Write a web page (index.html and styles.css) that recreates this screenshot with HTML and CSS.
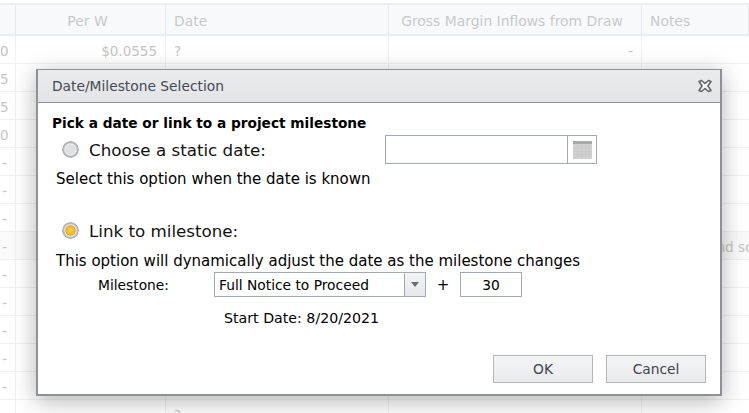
FILE: index.html
```html
<!DOCTYPE html>
<html lang="en">
<head>
    <meta charset="UTF-8">
    <title>Date/Milestone Selection</title>
    <link rel="stylesheet" href="styles.css">
</head>
<body>
    <div class="grid">
        <div class="row head"><div class="cell c0"></div><div class="cell c1">Per W</div><div class="cell c2">Date</div><div class="cell c3">Gross Margin Inflows from Draw</div><div class="cell c4">Notes</div></div>
        <div class="row"><div class="cell c0">0</div><div class="cell c1">$0.0555</div><div class="cell c2">?</div><div class="cell c3">-</div><div class="cell c4"></div></div>
        <div class="row"><div class="cell c0">5</div><div class="cell c1"></div><div class="cell c2"></div><div class="cell c3"></div><div class="cell c4"></div></div>
        <div class="row"><div class="cell c0">5</div><div class="cell c1"></div><div class="cell c2"></div><div class="cell c3"></div><div class="cell c4"></div></div>
        <div class="row"><div class="cell c0">0</div><div class="cell c1"></div><div class="cell c2"></div><div class="cell c3"></div><div class="cell c4"></div></div>
        <div class="row"><div class="cell c0">-</div><div class="cell c1"></div><div class="cell c2"></div><div class="cell c3"></div><div class="cell c4"></div></div>
        <div class="row"><div class="cell c0">-</div><div class="cell c1"></div><div class="cell c2"></div><div class="cell c3"></div><div class="cell c4"></div></div>
        <div class="row"><div class="cell c0">-</div><div class="cell c1"></div><div class="cell c2"></div><div class="cell c3"></div><div class="cell c4"></div></div>
        <div class="row alt"><div class="cell c0">-</div><div class="cell c1"></div><div class="cell c2"></div><div class="cell c3"></div><div class="cell c4">Pending and sc</div></div>
        <div class="row"><div class="cell c0">-</div><div class="cell c1"></div><div class="cell c2"></div><div class="cell c3"></div><div class="cell c4"></div></div>
        <div class="row"><div class="cell c0">-</div><div class="cell c1"></div><div class="cell c2"></div><div class="cell c3"></div><div class="cell c4"></div></div>
        <div class="row"><div class="cell c0">-</div><div class="cell c1"></div><div class="cell c2"></div><div class="cell c3"></div><div class="cell c4"></div></div>
        <div class="row"><div class="cell c0">-</div><div class="cell c1"></div><div class="cell c2"></div><div class="cell c3"></div><div class="cell c4"></div></div>
        <div class="row"><div class="cell c0">-</div><div class="cell c1"></div><div class="cell c2"></div><div class="cell c3"></div><div class="cell c4"></div></div>
        <div class="row"><div class="cell c0"></div><div class="cell c1"></div><div class="cell c2">?</div><div class="cell c3"></div><div class="cell c4"></div></div>
    </div>

    <div class="dialog">
        <div class="dialog-title">
            <span>Date/Milestone Selection</span>
            <svg class="close" width="16" height="14" viewBox="0 0 16 14">
                <path d="M2 2.5 L4.5 1.5 L8 4.5 L11.5 1.5 L14 2.5 L11 7 L14 11.5 L11.5 12.5 L8 9.5 L4.5 12.5 L2 11.5 L5 7 Z" fill="#f4f5f6" stroke="#63666b" stroke-width="1.6" stroke-linejoin="round"/>
            </svg>
        </div>
        <div class="dialog-body">
            <div class="lead">Pick a date or link to a project milestone</div>

            <div class="choice">
                <label class="choice-label"><span class="radio"></span>Choose a static date:</label>
                <div class="date-input">
                    <div class="date-text"></div>
                    <div class="date-btn">
                        <svg width="19" height="18" viewBox="0 0 19 18">
                            <rect x="0" y="0" width="19" height="18" fill="#d0d0d0"/>
                            <rect x="0" y="0" width="19" height="3" fill="#a8a8a8"/>
                            <path d="M1 7.5H18M1 10.5H18M1 13.5H18M4.5 4V17M8.5 4V17M12.5 4V17M16 4V17" stroke="#c9c9c9" stroke-width="1"/>
                        </svg>
                    </div>
                </div>
            </div>
            <div class="hint hint-static">Select this option when the date is known</div>

            <div class="choice choice-link">
                <label class="choice-label"><span class="radio on"></span>Link to milestone:</label>
            </div>
            <div class="hint hint-link">This option will dynamically adjust the date as the milestone changes</div>

            <div class="milestone-row">
                <span class="milestone-label">Milestone:</span>
                <div class="select">
                    <div class="select-text">Full Notice to Proceed</div>
                    <div class="select-btn"><span class="arrow"></span></div>
                </div>
                <span class="plus">+</span>
                <div class="days">30</div>
            </div>
            <div class="start-date">Start Date: 8/20/2021</div>

            <div class="actions">
                <button class="btn">OK</button>
                <button class="btn">Cancel</button>
            </div>
        </div>
    </div>
</body>
</html>
```

FILE: styles.css
```css
html, body {
    margin: 0;
    height: 100%;
    overflow: hidden;
}

body {
    position: relative;
    padding-top: 4px;
    box-sizing: border-box;
    background: #fff;
    font-family: "DejaVu Sans", sans-serif;
    font-size: 13.8px;
    color: #000;
}

/* grid behind the dialog */
.grid {
    border-top: 2px solid #eceef0;
    margin-top: -1px;
}

.row {
    display: flex;
    height: 28px;
    box-sizing: border-box;
    border-bottom: 1px solid #f1f1f1;
    color: #c4c4c4;
    font-size: 13.5px;
}

.row.head {
    height: 31px;
    background: #f8f9fb;
    border-bottom: 2px solid #ebecee;
    color: #c9c9c9;
    font-size: 13.9px;
}

.row.alt {
    background: #fafafa;
}

.cell {
    box-sizing: border-box;
    padding: 0 8px;
    line-height: 31px;
    border-right: 1px solid #f1f1f1;
    white-space: nowrap;
    overflow: hidden;
}

.head .cell {
    border-right: 1px solid #e8e9eb;
    line-height: 32px;
}

.c0 { width: 16px; padding: 0 8px 0 0; text-align: right; }
.c1 { width: 150px; text-align: right; }
.c2 { width: 223px; }
.c3 { width: 253px; text-align: right; }
.c4 { flex: 1; border-right: 0; }
.head .c1 { text-align: center; padding: 0 14px 0 8px; }
.head .c3 { text-align: center; padding: 0 14px 0 8px; }

/* dialog */
.dialog {
    position: absolute;
    left: 36px;
    top: 69px;
    width: 686px;
    height: 327px;
    box-sizing: border-box;
    background: #fff;
    border: 1px solid #8e9297;
    border-width: 1px 2px 2px 2px;
    box-shadow: 0 5px 22px rgba(0, 0, 0, 0.3);
}

.dialog-title {
    display: flex;
    align-items: center;
    justify-content: space-between;
    height: 33px;
    box-sizing: border-box;
    padding: 0 7px 0 14px;
    background: linear-gradient(#e9ebed, #e2e4e7);
    border-bottom: 1px solid #8e9297;
    font-size: 13.8px;
    color: #454a52;
}

.dialog-body {
    padding: 11px 14px 0 14px;
}

.lead {
    font-weight: bold;
    font-size: 13.7px;
    line-height: 18px;
}

.choice {
    display: flex;
    align-items: center;
    justify-content: space-between;
    height: 29px;
    margin-top: 3px;
    padding-right: 109px;
}

.choice-link {
    margin-top: 28px;
}

.choice-label {
    display: flex;
    align-items: center;
    padding-left: 10px;
    font-size: 16.7px;
    color: #111;
}

.radio {
    width: 17px;
    height: 17px;
    margin-right: 10px;
    border-radius: 50%;
    background: radial-gradient(circle, #e0e0e0 0, #e0e0e0 4.5px, #f1f1f1 5.5px, #bfc2c6 6.5px, #a9acb1 8px, rgba(169, 172, 177, 0) 8.7px);
}

.radio.on {
    background: radial-gradient(circle, #fbd335 0, #f5c02a 3.5px, #e9a21c 4.8px, #f3f3f3 5.6px, #c3c5c9 6.5px, #a9acb1 8px, rgba(169, 172, 177, 0) 8.7px);
}

.date-input {
    display: flex;
    width: 212px;
    height: 29px;
    box-sizing: border-box;
    border: 1px solid #a3a9b2;
}

.date-text {
    flex: 1;
}

.date-btn {
    display: flex;
    align-items: center;
    justify-content: center;
    width: 28px;
    border-left: 1px solid #a3a9b2;
}

.hint {
    padding-left: 4px;
    font-size: 15px;
    line-height: 18px;
}

.hint-static {
    margin-top: 6px;
}

.hint-link {
    margin-top: 7px;
    padding-left: 4px;
}

.milestone-row {
    display: flex;
    align-items: center;
    margin-top: 2px;
    height: 25px;
}

.milestone-label {
    width: 116px;
    padding-left: 46px;
    box-sizing: content-box;
}

.select {
    display: flex;
    width: 212px;
    height: 25px;
    box-sizing: border-box;
    border: 1px solid #a3a9b2;
}

.select-text {
    flex: 1;
    padding-left: 4px;
    line-height: 24px;
}

.select-btn {
    display: flex;
    align-items: center;
    justify-content: center;
    width: 20px;
    background: linear-gradient(#f3f4f6, #e6e8eb);
    border-left: 1px solid #a3a9b2;
}

.arrow {
    width: 0;
    height: 0;
    border: 4px solid transparent;
    border-top: 5px solid #6b6f75;
    border-bottom: 0;
}

.plus {
    width: 34px;
    font-size: 15px;
    text-align: center;
}

.days {
    width: 62px;
    height: 25px;
    box-sizing: border-box;
    border: 1px solid #a3a9b2;
    text-align: center;
    line-height: 24px;
}

.start-date {
    margin-top: 12px;
    padding-left: 172px;
    font-size: 14.2px;
    line-height: 18px;
}

.actions {
    display: flex;
    justify-content: flex-end;
    gap: 13px;
    margin-top: 28px;
}

.btn {
    width: 100px;
    height: 28px;
    padding: 0;
    background: linear-gradient(#f3f4f6, #e8eaed);
    border: 1px solid #b3b7bd;
    font-family: inherit;
    font-size: 13.8px;
    color: #3f444b;
}
```
